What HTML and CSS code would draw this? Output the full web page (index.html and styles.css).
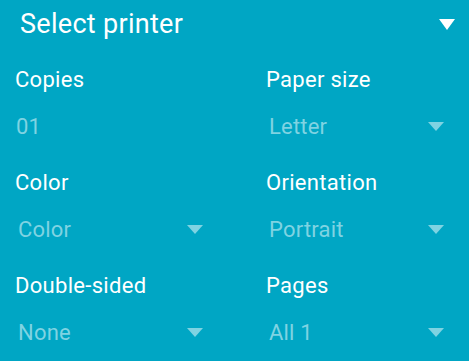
FILE: index.html
```html
<!DOCTYPE html>
<html>
	<head>
		<meta charset="UTF-8">
		<title>Print</title>
		<link rel="stylesheet" href="styles.css">
	</head>
	<body>
		<div class="header">
			<span class="title">Select printer</span>
			<span class="arrow arrow-white"></span>
		</div>
		<div class="options">
			<div class="field">
				<div class="label">Copies</div>
				<div class="value edit">01</div>
			</div>
			<div class="field">
				<div class="label">Paper size</div>
				<div class="value">Letter<span class="arrow"></span></div>
			</div>
			<div class="field">
				<div class="label">Color</div>
				<div class="value">Color<span class="arrow"></span></div>
			</div>
			<div class="field">
				<div class="label">Orientation</div>
				<div class="value">Portrait<span class="arrow"></span></div>
			</div>
			<div class="field">
				<div class="label">Double-sided</div>
				<div class="value">None<span class="arrow"></span></div>
			</div>
			<div class="field">
				<div class="label">Pages</div>
				<div class="value">All 1<span class="arrow"></span></div>
			</div>
		</div>
	</body>
</html>
```

FILE: styles.css
```css
* {
	margin: 0;
	padding: 0;
	box-sizing: border-box;
}
html, body {
	height: 100%;
}
body {
	background-color: #00a6c4;
	font-family: Roboto, "Liberation Sans", sans-serif;
	color: #fff;
	overflow: hidden;
}
.header {
	display: flex;
	align-items: center;
	justify-content: space-between;
	height: 48px;
	padding: 0 14px 0 20px;
}
.title {
	font-size: 27px;
	line-height: 48px;
	letter-spacing: 0.3px;
}
.arrow {
	display: inline-block;
	width: 0;
	height: 0;
	border-left: 8px solid transparent;
	border-right: 8px solid transparent;
	border-top: 9px solid #7fd3e2;
}
.arrow-white {
	border-left-width: 8.5px;
	border-right-width: 8.5px;
	border-top: 11px solid #fff;
}
.options {
	display: grid;
	grid-template-columns: 200px 190px;
	column-gap: 51px;
	row-gap: 19px;
	padding: 18.5px 0 0 15px;
}
.label {
	font-size: 22px;
	line-height: 26px;
	letter-spacing: 0.3px;
	margin-bottom: 10px;
}
.value {
	display: flex;
	align-items: center;
	justify-content: space-between;
	height: 48px;
	padding: 0 12px 0 3px;
	font-size: 22px;
	letter-spacing: 0.2px;
	color: #7fd3e2;
}
.edit {
	padding-left: 1px;
}
```
